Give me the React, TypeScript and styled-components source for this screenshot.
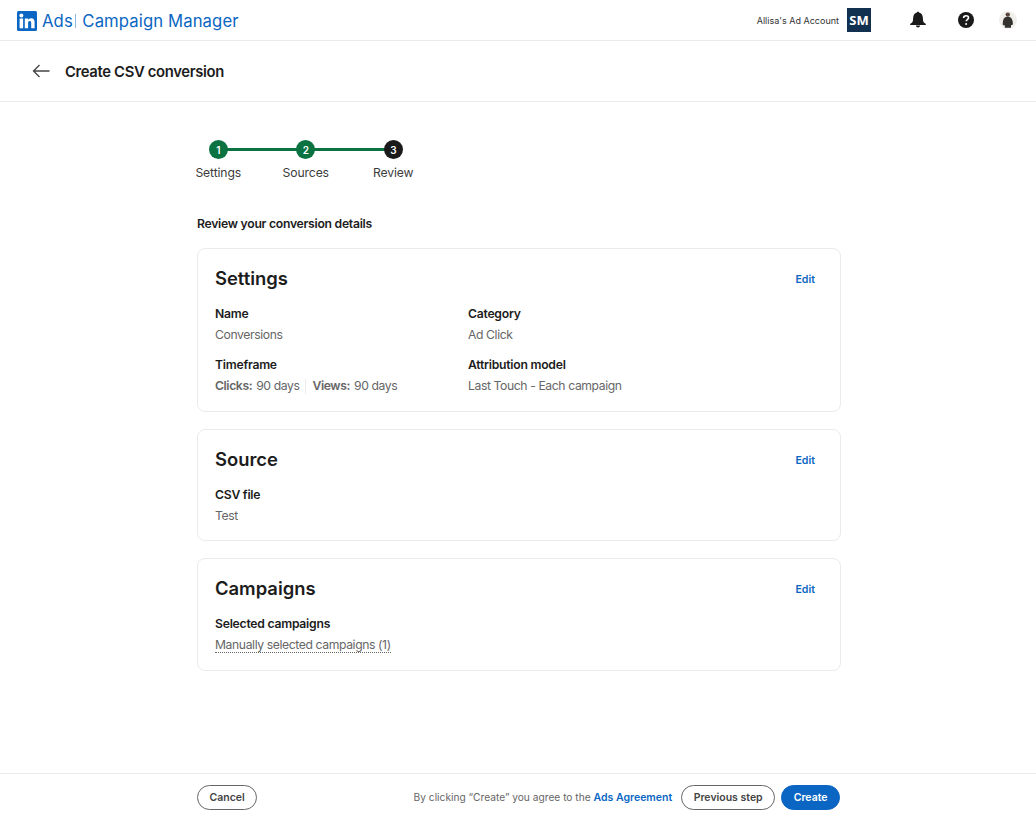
import React from 'react';
import styled, { createGlobalStyle } from 'styled-components';

const GlobalStyle = createGlobalStyle`
  html, body { margin: 0; padding: 0; background: #fff; }
  body { font-family: Inter, "Liberation Sans", sans-serif; color: #1c1c1c; }
  * { box-sizing: border-box; }
`;

const Page = styled.div`
  height: 819px;
  display: flex;
  flex-direction: column;
  overflow: hidden;
`;

const Header = styled.header`
  height: 41px;
  flex: none;
  display: flex;
  align-items: center;
  padding: 0 19px 0 17px;
  border-bottom: 1px solid #ebebeb;
`;

const Logo = styled.div`
  display: flex;
  align-items: center;
  color: #0a66c2;
  font-size: 16.7px;
  letter-spacing: 0.1px;
  padding-top: 1px;
`;

const LogoBadge = styled.svg`
  width: 20px;
  height: 20px;
  margin-right: 5px;
`;

const LogoBar = styled.span`
  width: 1px;
  height: 14px;
  background: #8db8e2;
  margin: 1px 6px 0 2.5px;
`;

const HeaderRight = styled.div`
  margin-left: auto;
  display: flex;
  align-items: center;
`;

const AccountName = styled.span`
  font-size: 9px;
  color: #333;
  margin-right: 8px;
`;

const AccountBadge = styled.div`
  width: 24px;
  height: 24px;
  background: #12304f;
  color: #fff;
  font-size: 13px;
  font-weight: 700;
  display: flex;
  align-items: center;
  justify-content: center;
  font-family: "Open Sans", sans-serif;
  margin-right: 38px;
`;

const IconWrap = styled.svg<{ $gap?: number }>`
  width: 18px;
  height: 18px;
  margin-right: ${(p) => p.$gap ?? 0}px;
  display: block;
`;

const TitleBar = styled.div`
  height: 61px;
  flex: none;
  display: flex;
  align-items: center;
  padding-left: 32px;
  border-bottom: 1px solid #ebebeb;
`;

const BackIcon = styled.svg`
  width: 18px;
  height: 14px;
  margin-right: 15px;
`;

const Title = styled.h1`
  margin: 2px 0 0;
  font-size: 14.8px;
  letter-spacing: -0.33px;
  font-weight: 600;
  color: #1c1c1c;
`;

const Main = styled.main`
  flex: 1;
  width: 644px;
  margin-left: 197px;
  padding-top: 38px;
`;

const Stepper = styled.ol`
  list-style: none;
  margin: 0 0 0 -22.5px;
  padding: 0;
  display: flex;
  height: 43px;
`;

const Step = styled.li`
  position: relative;
  width: 87.5px;
  display: flex;
  flex-direction: column;
  align-items: center;
  font-size: 12.2px;
  letter-spacing: -0.12px;
  line-height: 14px;
  color: #3c3c3c;
`;

const StepLine = styled.span`
  position: absolute;
  top: 8px;
  left: 50%;
  width: 100%;
  height: 3px;
  background: #0b7241;
`;

const StepDot = styled.span<{ $current?: boolean }>`
  position: relative;
  width: 19px;
  height: 19px;
  border-radius: 50%;
  background: ${(p) => (p.$current ? '#1a1a1a' : '#0b7241')};
  color: #fff;
  font-size: 10px;
  font-weight: 600;
  display: flex;
  align-items: center;
  justify-content: center;
  margin-bottom: 7px;
`;

const ReviewHeading = styled.h2`
  margin: 33px 0 16px;
  font-size: 12.2px;
  letter-spacing: -0.27px;
  line-height: 16px;
  font-weight: 600;
  color: #1c1c1c;
`;

const Card = styled.section<{ $height: number }>`
  height: ${(p) => p.$height}px;
  border: 1px solid #ebebeb;
  border-radius: 8px;
  padding: 18px 25px 0 17px;
  margin-bottom: 17px;
`;

const CardHead = styled.div`
  display: flex;
  justify-content: space-between;
  align-items: center;
  height: 24px;
  margin-bottom: 15px;
`;

const CardTitle = styled.h3`
  margin: 0 0 2px;
  font-size: 18.4px;
  font-weight: 600;
  color: #1c1c1c;
`;

const EditLink = styled.a`
  font-size: 10.6px;
  font-weight: 600;
  color: #0a66c2;
`;

const FieldGrid = styled.div`
  display: grid;
  grid-template-columns: 253px 1fr;
  row-gap: 14px;
`;

const Field = styled.div`
  display: flex;
  flex-direction: column;
  gap: 5px;
`;

const Label = styled.div`
  font-size: 12.2px;
  letter-spacing: -0.25px;
  line-height: 16px;
  font-weight: 600;
  color: #1c1c1c;
`;

const Value = styled.div`
  font-size: 12.2px;
  letter-spacing: -0.4px;
  line-height: 16px;
  color: #666;
  display: flex;
  align-items: center;
`;

const Strong = styled.b`
  font-weight: 600;
  margin-right: 4px;
`;

const Divider = styled.span`
  width: 1px;
  height: 15px;
  background: #ebebeb;
  margin: 0 6px;
`;

const DottedValue = styled.span`
  border-bottom: 1px dotted #666;
  line-height: 15px;
`;

const Footer = styled.footer`
  height: 46px;
  flex: none;
  border-top: 1px solid #ebebeb;
  display: flex;
  align-items: center;
  padding: 1px 196px 0 197px;
`;

const Button = styled.button<{ $primary?: boolean }>`
  height: 25px;
  padding: 0 11.5px;
  border-radius: 13px;
  border: 1px solid ${(p) => (p.$primary ? '#0a66c2' : '#666')};
  background: ${(p) => (p.$primary ? '#0a66c2' : '#fff')};
  color: ${(p) => (p.$primary ? '#fff' : '#444')};
  font-family: inherit;
  font-size: 10.5px;
  font-weight: 600;
`;

const Agreement = styled.span`
  margin-left: auto;
  margin-right: 9px;
  font-size: 10.2px;
  color: #666;
`;

const AgreementLink = styled.a`
  color: #0a66c2;
  font-weight: 600;
  font-size: 10.5px;
`;

const CreateButton = styled(Button)`
  margin-left: 6px;
`;

const steps = ['Settings', 'Sources', 'Review'];

const App = () => {
  return (
    <Page>
      <GlobalStyle />
      <Header>
        <Logo>
          <LogoBadge viewBox="0 0 20 20">
            <rect width="20" height="20" rx="1.5" fill="#0a66c2" />
            <rect x="2.600" y="7.500" width="3.500" height="9.800" fill="#fff" />
            <circle cx="4.350" cy="4.600" r="2" fill="#fff" />
            <path d="M7.800 7.500h3.300v1.400c.5-.9 1.600-1.700 3.100-1.700 2.700 0 3.400 1.700 3.400 4.200v5.900h-3.400v-5.200c0-1.200-.3-2-1.300-2-1.300 0-1.800.9-1.800 2.100v5.100H7.800z" fill="#fff" />
          </LogoBadge>
          Ads
          <LogoBar />
          Campaign Manager
        </Logo>
        <HeaderRight>
          <AccountName>Allisa's Ad Account</AccountName>
          <AccountBadge>SM</AccountBadge>
          <IconWrap viewBox="0 0 18 18" $gap={29.5}>
            <path d="M9 .8c.7 0 1.200.4 1.300 1 2.200.5 3.300 2.200 3.500 4.500l.3 3.400c.2 1.400 1.200 2.300 2.700 3.100v1.100H1.200v-1.100c1.500-.8 2.500-1.700 2.700-3.100l.3-3.400c.2-2.300 1.300-4 3.500-4.500C7.800 1.200 8.300.8 9 .8z" fill="#1a1a1a" />
            <path d="M6.900 14.400h4.200C11 15.600 10.100 16.400 9 16.400s-2-.8-2.100-2z" fill="#1a1a1a" />
          </IconWrap>
          <IconWrap viewBox="0 0 18 18" $gap={24.5}>
            <circle cx="9" cy="9" r="8" fill="#1a1a1a" />
            <path d="M6.600 7.100c0-1.400 1-2.300 2.500-2.300s2.400.8 2.400 2c0 1.800-2.300 1.800-2.300 3.500" fill="none" stroke="#fff" strokeWidth="1.600" />
            <circle cx="9.100" cy="12.900" r="1" fill="#fff" />
          </IconWrap>
          <IconWrap viewBox="0 0 18 18">
            <circle cx="9" cy="9" r="9" fill="#f1efec" />
            <circle cx="8.800" cy="3.600" r="2.200" fill="#5a463a" />
            <path d="M3.800 14c-.2-3 .3-6.500 2.300-7.700 1.600-.8 3.700-.8 5.200 0 2 1.200 2.700 4.400 2.600 7.200-.6.600-1.400.8-1.900.8v2.500H5.800V14.300c-.8 0-1.500-.1-2-.3z" fill="#33322f" />
          </IconWrap>
        </HeaderRight>
      </Header>

      <TitleBar>
        <BackIcon viewBox="0 0 18 14">
          <path d="M17.500 7H1.500M7.500 1l-6 6 6 6" fill="none" stroke="#444" strokeWidth="1.300" />
        </BackIcon>
        <Title>Create CSV conversion</Title>
      </TitleBar>

      <Main>
        <Stepper>
          {steps.map((label, i) => (
            <Step key={label}>
              {i < steps.length - 1 && <StepLine />}
              <StepDot $current={i === steps.length - 1}>{i + 1}</StepDot>
              {label}
            </Step>
          ))}
        </Stepper>

        <ReviewHeading>Review your conversion details</ReviewHeading>

        <Card $height={164}>
          <CardHead>
            <CardTitle>Settings</CardTitle>
            <EditLink>Edit</EditLink>
          </CardHead>
          <FieldGrid>
            <Field>
              <Label>Name</Label>
              <Value>Conversions</Value>
            </Field>
            <Field>
              <Label>Category</Label>
              <Value>Ad Click</Value>
            </Field>
            <Field>
              <Label>Timeframe</Label>
              <Value>
                <Strong>Clicks:</Strong> 90 days
                <Divider />
                <Strong>Views:</Strong> 90 days
              </Value>
            </Field>
            <Field>
              <Label>Attribution model</Label>
              <Value>Last Touch - Each campaign</Value>
            </Field>
          </FieldGrid>
        </Card>

        <Card $height={112}>
          <CardHead>
            <CardTitle>Source</CardTitle>
            <EditLink>Edit</EditLink>
          </CardHead>
          <Field>
            <Label>CSV file</Label>
            <Value>Test</Value>
          </Field>
        </Card>

        <Card $height={113}>
          <CardHead>
            <CardTitle>Campaigns</CardTitle>
            <EditLink>Edit</EditLink>
          </CardHead>
          <Field>
            <Label>Selected campaigns</Label>
            <Value>
              <DottedValue>Manually selected campaigns (1)</DottedValue>
            </Value>
          </Field>
        </Card>
      </Main>

      <Footer>
        <Button>Cancel</Button>
        <Agreement>
          By clicking “Create” you agree to the <AgreementLink>Ads Agreement</AgreementLink>
        </Agreement>
        <Button>Previous step</Button>
        <CreateButton $primary>Create</CreateButton>
      </Footer>
    </Page>
  );
};

export default App;
